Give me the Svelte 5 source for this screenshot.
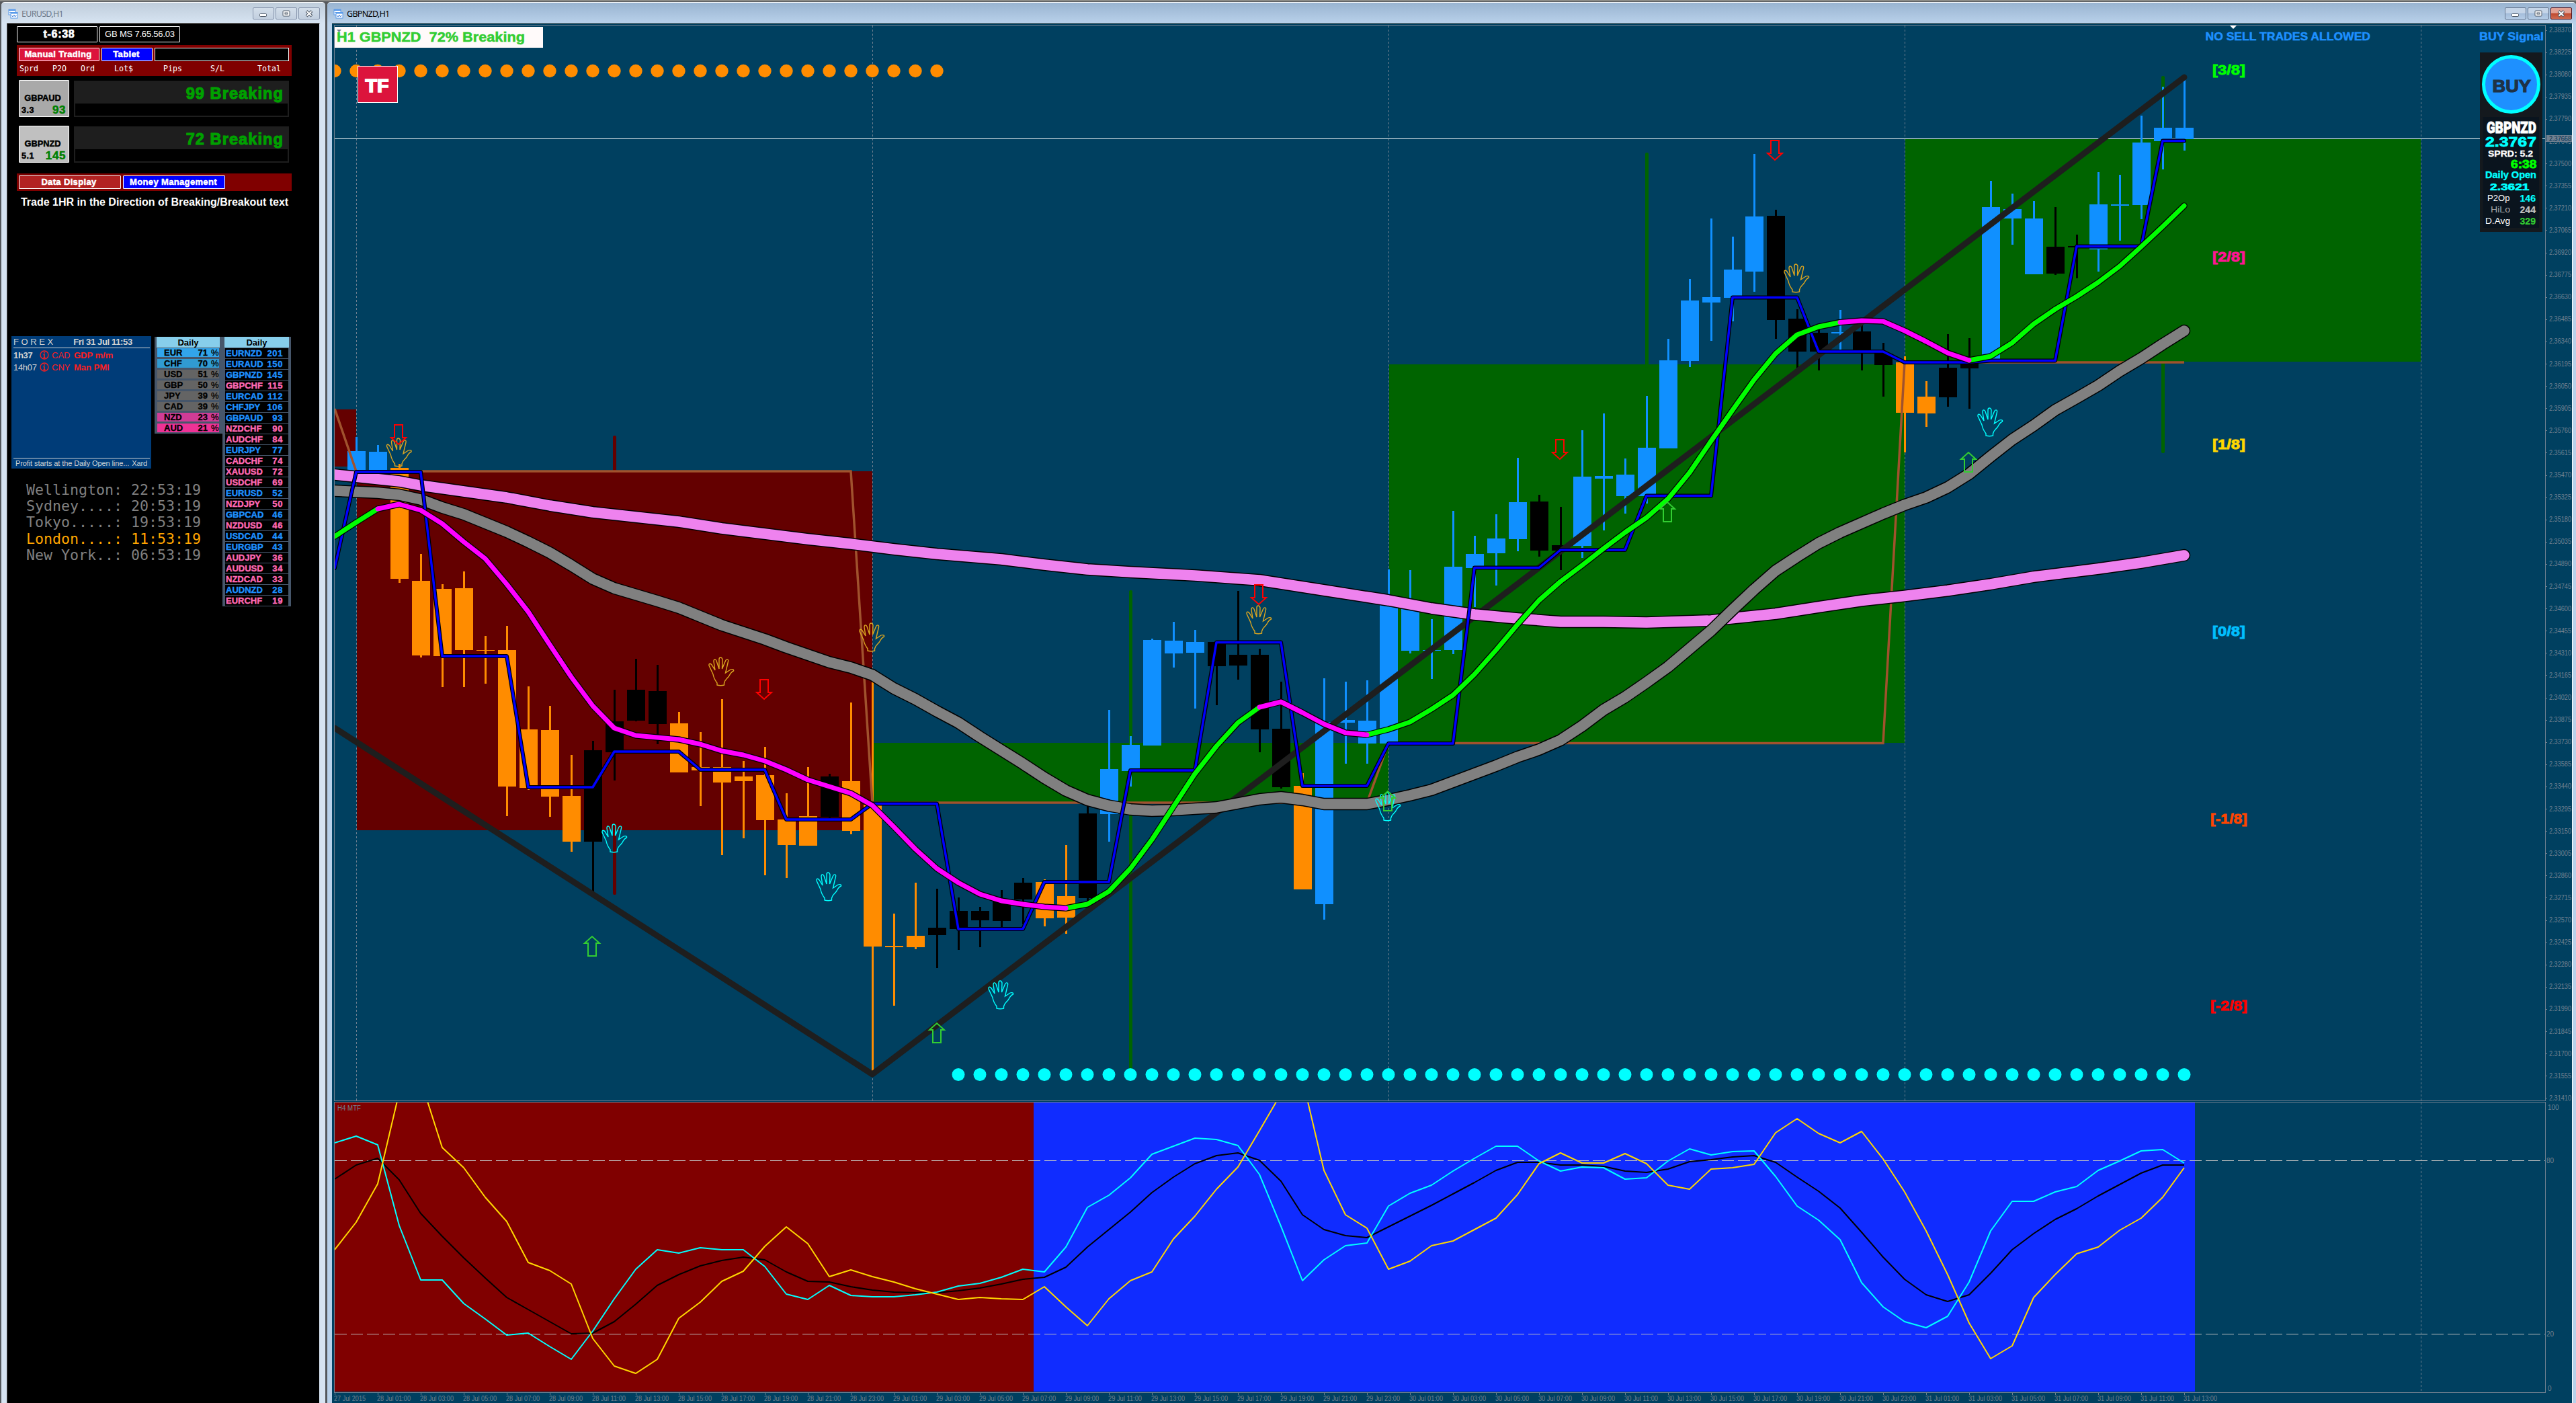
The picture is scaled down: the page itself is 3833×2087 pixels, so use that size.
<script>
  const STEP = 32;
  const X0 = 498;
  const bx = (i) => X0 + STEP * i;

  const colors = { B: '#1090ff', O: '#ff8c00', K: '#000000' };

  // [bar, high, top, bottom, low, colour]
  const candles = [
    [1, 650, 671, 700, 700, 'B'], [2, 662, 672, 700, 700, 'B'], [3, 690, 696, 861, 867, 'O'],
    [4, 824, 864, 975, 978, 'O'], [5, 869, 876, 976, 1022, 'O'], [6, 850, 875, 967, 1022, 'O'],
    [7, 946, 967, 968, 1017, 'O'], [8, 931, 967, 1170, 1214, 'O'], [9, 1021, 1085, 1172, 1175, 'O'],
    [10, 1050, 1086, 1185, 1215, 'O'], [11, 1123, 1184, 1252, 1267, 'O'], [12, 1102, 1116, 1252, 1327, 'K'],
    [13, 1026, 1073, 1119, 1161, 'K'], [14, 980, 1026, 1072, 1073, 'K'], [15, 989, 1028, 1077, 1107, 'K'],
    [16, 1059, 1076, 1149, 1149, 'O'], [17, 1089, 1141, 1146, 1199, 'O'], [18, 1040, 1141, 1164, 1272, 'O'],
    [19, 1132, 1155, 1162, 1247, 'O'], [20, 1111, 1153, 1220, 1302, 'O'], [21, 1180, 1219, 1257, 1306, 'O'],
    [22, 1141, 1214, 1258, 1258, 'O'], [23, 1151, 1155, 1215, 1217, 'K'], [24, 1045, 1162, 1236, 1241, 'O'],
    [25, 1004, 1197, 1408, 1598, 'O'], [26, 1359, 1407, 1409, 1496, 'O'], [27, 1313, 1392, 1409, 1412, 'O'],
    [28, 1322, 1380, 1391, 1440, 'K'], [29, 1335, 1355, 1382, 1413, 'K'], [30, 1349, 1355, 1369, 1409, 'K'],
    [31, 1324, 1338, 1370, 1379, 'K'], [32, 1306, 1313, 1338, 1375, 'K'], [33, 1308, 1312, 1366, 1378, 'O'],
    [34, 1257, 1333, 1365, 1389, 'O'], [35, 1198, 1210, 1336, 1340, 'K'], [36, 1056, 1144, 1211, 1252, 'B'],
    [37, 1095, 1108, 1147, 1170, 'B'], [38, 950, 952, 1109, 1109, 'B'], [39, 925, 953, 972, 993, 'B'],
    [40, 937, 955, 971, 1054, 'B'], [41, 955, 955, 991, 1049, 'K'], [42, 879, 974, 990, 1011, 'K'],
    [43, 965, 974, 1085, 1119, 'K'], [44, 1014, 1084, 1171, 1173, 'K'], [45, 1150, 1169, 1323, 1323, 'O'],
    [46, 1009, 1074, 1345, 1368, 'B'], [47, 1014, 1071, 1075, 1136, 'B'], [48, 1012, 1072, 1106, 1136, 'B'],
    [49, 847, 892, 1106, 1106, 'B'], [50, 848, 904, 968, 972, 'B'], [51, 921, 967, 968, 1010, 'B'],
    [52, 760, 843, 967, 973, 'B'], [53, 797, 824, 845, 903, 'B'], [54, 765, 801, 823, 871, 'B'],
    [55, 681, 747, 802, 820, 'B'], [56, 736, 746, 819, 828, 'K'], [57, 754, 811, 819, 848, 'K'],
    [58, 640, 709, 812, 830, 'B'], [59, 615, 708, 712, 789, 'B'], [60, 682, 706, 738, 764, 'B'],
    [61, 589, 666, 738, 749, 'B'], [62, 504, 536, 667, 667, 'B'], [63, 415, 447, 537, 546, 'B'],
    [64, 325, 442, 450, 507, 'B'], [65, 352, 401, 443, 478, 'B'], [66, 229, 322, 404, 434, 'B'],
    [67, 312, 321, 476, 504, 'K'], [68, 460, 474, 523, 550, 'K'], [69, 490, 495, 523, 551, 'K'],
    [70, 461, 494, 496, 520, 'B'], [71, 484, 493, 526, 551, 'K'], [72, 510, 526, 543, 590, 'K'],
    [73, 530, 539, 614, 673, 'O'], [74, 567, 590, 615, 635, 'O'], [75, 497, 547, 591, 605, 'K'],
    [76, 503, 537, 548, 608, 'K'], [77, 269, 308, 537, 537, 'B'], [78, 288, 311, 325, 364, 'B'],
    [79, 299, 325, 408, 408, 'B'], [80, 308, 367, 407, 409, 'K'], [81, 349, 366, 368, 414, 'K'],
    [82, 256, 304, 371, 404, 'B'], [83, 260, 304, 306, 358, 'B'], [84, 172, 212, 305, 326, 'B'],
    [85, 129, 190, 210, 252, 'B'], [86, 115, 190, 207, 224, 'B']
  ];

  // moving averages as [bar, y]
  const slowMa = [
    [0, 706], [3, 716], [4, 722], [6, 731], [8, 740], [10, 752], [12, 762], [14, 769], [16, 776], [18, 786],
    [20, 794], [22, 802], [24, 809], [26, 817], [28, 824], [31, 832], [33, 840], [35, 847], [37, 851], [40, 856],
    [43, 863], [46, 878], [49, 893], [51, 905], [53, 914], [55, 920], [57, 925], [59, 925], [61, 926], [64, 923],
    [67, 913], [69, 903], [71, 893.5], [73, 886.5], [75, 878.5], [77, 869], [79, 858], [82, 846], [84, 837], [86, 826]
  ];

  const midMa = [
    [0, 730], [2, 733], [3, 736], [4, 743], [5, 755], [6, 765], [7, 778], [8, 791], [9, 806], [10, 822], [11, 841],
    [12, 861], [13, 875], [15, 894], [16, 904], [17, 917], [18, 930], [20, 951], [21, 963], [23, 985], [24, 993],
    [25, 1004], [26, 1024], [27, 1040], [28, 1058], [29, 1075], [30, 1096], [31, 1116], [32, 1136], [33, 1157],
    [34, 1176], [35, 1190], [36, 1198.5], [37, 1204], [38, 1206], [39, 1205], [40, 1203], [41, 1201], [42, 1195],
    [43, 1189], [44, 1186], [45, 1190], [46, 1196], [47, 1196], [48, 1196], [49, 1190], [50, 1183], [51, 1175],
    [52, 1163], [53, 1151], [54, 1139], [55, 1126], [56, 1115], [57, 1101], [58, 1080], [59, 1056], [60, 1037],
    [61, 1015], [62, 992], [63, 965], [64, 938], [65, 907], [66, 877], [67, 849], [68, 828], [69, 808], [70, 792],
    [71, 778], [72, 764], [73, 751], [74, 740], [75, 725], [76, 705], [77, 679], [78, 654], [79, 633], [80, 610],
    [81, 592], [82, 573.5], [83, 552], [84, 533], [85, 512], [86, 492]
  ];

  const fastMa = [
    798, 777, 757, 750, 759, 779, 806, 831, 869, 910, 959, 1007, 1050, 1083, 1094, 1097, 1100, 1107, 1117, 1123,
    1132, 1145, 1160, 1170, 1180, 1198, 1230, 1263, 1292, 1313, 1330, 1340, 1345, 1349, 1351, 1345, 1326, 1292,
    1249, 1200, 1151, 1110, 1075, 1052, 1044, 1060, 1077, 1090, 1093, 1085, 1074, 1055, 1034, 1003, 967, 929,
    893, 865, 841, 816, 792, 770, 742, 703, 656, 610, 565, 526, 498, 486, 479.5, 477, 478, 492, 508, 525, 536,
    530, 510, 482, 460, 441, 420, 396, 367, 337, 306
  ];

  // stretches of the fast average, coloured by slope
  const fastRuns = [
    [0, 2, '#00ff00'], [34, 43, '#00ff00'], [48, 70, '#00ff00'], [76, 86, '#00ff00'],
    [2, 34, '#ff00ff'], [43, 48, '#ff00ff'], [70, 76, '#ff00ff']
  ];

  const h4Open = [
    [0, 845], [1, 702], [4, 702], [5, 976], [8, 976], [9, 1171], [12, 1171], [13, 1118], [16, 1118], [17, 1145],
    [20, 1145], [21, 1219], [24, 1219], [25, 1195.5], [28, 1195.5], [29, 1382], [32, 1382], [33, 1312], [36, 1312],
    [37, 1146], [40, 1146], [41, 955.5], [44, 955.5], [45, 1169], [48, 1169], [49, 1106], [52, 1106], [53, 844.5],
    [56, 844.5], [57, 818], [60, 818], [61, 737.5], [64, 737.5], [65, 442.5], [68, 442.5], [69, 523], [72, 523],
    [73, 539], [76, 539], [77, 536.5], [80, 536.5], [81, 366.5], [84, 366.5], [85, 209.5], [86, 209.5]
  ];

  const dailyOpen = [
    [0, 608], [1, 701], [24, 701], [25, 1194], [48, 1194], [49, 1105.5], [72, 1105.5], [73, 539], [86, 539]
  ];

  const signal = [
    60, 50, 63, 183, 264, 264, 299, 322, 346, 343, 363, 382, 340, 292, 248, 219, 224, 216, 219, 219, 244, 285, 293,
    272, 287, 289, 289, 286, 282, 273, 269, 260, 248, 252, 215, 156, 138, 112, 77, 65, 53, 55, 64, 107, 184, 265,
    234, 213, 209, 154, 135, 123, 102, 83, 65, 65, 87, 102, 96, 97, 114, 112, 87, 69, 78, 73, 72, 110, 154, 175,
    204, 268, 304, 326, 335, 318, 267, 191, 147, 147, 133, 125, 101, 87, 72, 70, 90
  ];
  const smooth = [
    114, 93, 83, 115, 165, 199, 231, 261, 290, 308, 326, 344, 343, 326, 300, 272, 256, 243, 235, 230, 234, 252, 266,
    267, 274, 279, 282, 283, 283, 280, 276, 270, 263, 260, 245, 215, 189, 163, 134, 111, 91, 79, 75, 86, 117, 167,
    189, 198, 201, 185, 169, 153, 136, 119, 101, 89, 89, 93, 93, 95, 102, 104, 99, 88, 85, 81, 79, 89, 111, 132,
    157, 193, 230, 263, 286, 296, 286, 254, 219, 195, 174, 158, 139, 122, 105, 93, 93
  ];
  const momentum = [
    219, 178, 121, -15, -33, 67, 97, 141, 177, 238, 250, 270, 351, 392, 403, 382, 321, 297, 266, 251, 214, 185, 210,
    259, 249, 259, 267, 277, 285, 293, 290, 292, 293, 274, 304, 332, 292, 265, 252, 203, 169, 129, 96, 42, -13, -35,
    101, 167, 187, 248, 236, 213, 206, 189, 172, 137, 91, 75, 90, 90, 76, 91, 123, 129, 99, 97, 92, 45, 24, 46, 60,
    43, 84, 133, 191, 256, 328, 381, 362, 290, 256, 225, 215, 190, 172, 141, 97
  ];

  const line = (pts) => pts.map(([i, y]) => `${bx(i)},${y}`).join(' ');
  const series = (ys, top = 0, from = 0) => ys.map((y, i) => `${bx(i + from)},${y + top}`).join(' ');

  const HAND =
    'M12 41v-3C9 34 7 31 6 25L0 12c-.5-3 2-4 4-1l5 8L7 6c0-4 3-4 4-1l4 12V3c0-4 4-4 5 0l-.5 14L24.5 5c1-3 5-3 4 1L24.5 23l6-4c2-2 7-2 6 1-3 1-5 4-7 8-3 4-6 5-7 10v3q-5 1.5-10.5 0z';
  const hands = [
    [593.5, 673, '#daa520'], [1073, 999, '#daa520'], [1297, 948, '#daa520'], [1873, 922, '#daa520'],
    [2673, 414, '#daa520'], [914, 1247, '#00ffff'], [1233, 1319, '#00ffff'], [1489, 1480, '#00ffff'],
    [2065, 1200, '#00ffff'], [2961, 628, '#00ffff']
  ];
  const sells = [[593, 646], [1137, 1025], [1873, 884], [2321, 668], [2641, 223]];
  const buys = [[881, 1407], [1394, 1536], [2065, 1191], [2481, 761], [2929, 687]];

  const levels = [
    ['[3/8]', 103.5, '#00ff00'], ['[2/8]', 382, '#ff1493'], ['[1/8]', 660.5, '#ffd700'],
    ['[0/8]', 939, '#00bfff'], ['[-1/8]', 1217.5, '#ff4500'], ['[-2/8]', 1496, '#ff0000']
  ];

  const prices = Array.from({ length: 49 }, (_, i) => ({
    label: (2.3837 - i * 0.00145).toFixed(5),
    y: 44.5 + i * 33.1
  }));

  const dates = Array.from({ length: 44 }, (_, k) => {
    const i = k * 2;
    if (i === 0) return { x: bx(0), label: '27 Jul 2015' };
    const h = i - 1;
    const hh = String(h % 24).padStart(2, '0');
    return { x: bx(i), label: `${28 + Math.floor(h / 24)} Jul ${hh}:00` };
  });

  const orangeDots = Array.from({ length: 29 }, (_, i) => i);
  const aquaDots = Array.from({ length: 58 }, (_, i) => i + 29);

  // [text, x, baseline, width, size, colour, face, outline]
  const info = [
    ['GBPNZD', 3700, 198, 74, 24.5, '#ffffff', 'cond', 1], ['2.3767', 3698, 218, 76, 20, '#00ffff', 'bold', 0.8],
    ['SPRD: 5.2', 3702, 233, 67, 13.5, '#ffffff', 'bold', 0.3], ['6:38', 3736, 250, 38.5, 16, '#00ff00', 'bold', 0.8],
    ['Daily Open', 3698, 265, 76, 14, '#00ffff', 'bold', 0.4], ['2.3621', 3705, 283, 58.5, 15.5, '#00ffff', 'bold', 0.7],
    ['P2Op', 3701, 299, 33.5, 13.5, '#ffffff', '', 0], ['146', 3749.5, 300, 23.5, 14, '#00ffff', 'bold', 0.2],
    ['HiLo', 3706, 316, 29, 13.5, '#a9a9a9', '', 0], ['244', 3749.5, 317, 23.5, 14, '#c0c0c0', 'bold', 0.2],
    ['D.Avg', 3698, 333, 37, 13.5, '#ffffff', '', 0], ['329', 3749.5, 334, 23.5, 14, '#32cd32', 'bold', 0.2]
  ];

  const trades = [
    { pair: 'GBPAUD', spread: '3.3', pips: '93', status: '99 Breaking' },
    { pair: 'GBPNZD', spread: '5.1', pips: '145', status: '72 Breaking', light: true }
  ];

  const strength = [
    ['EUR', 71, '#32a5eb'], ['CHF', 70, '#309bd2'], ['USD', 51, '#646464'], ['GBP', 50, '#646464'],
    ['JPY', 39, '#646464'], ['CAD', 39, '#646464'], ['NZD', 23, '#d03c96'], ['AUD', 21, '#ee3296']
  ];

  const pairs = [
    ['EURNZD', 201, 1], ['EURAUD', 150, 1], ['GBPNZD', 145, 1], ['GBPCHF', 115, 0], ['EURCAD', 112, 1],
    ['CHFJPY', 106, 1], ['GBPAUD', 93, 1], ['NZDCHF', 90, 0], ['AUDCHF', 84, 0], ['EURJPY', 77, 1],
    ['CADCHF', 74, 0], ['XAUUSD', 72, 0], ['USDCHF', 69, 0], ['EURUSD', 52, 1], ['NZDJPY', 50, 0],
    ['GBPCAD', 46, 1], ['NZDUSD', 46, 0], ['USDCAD', 44, 1], ['EURGBP', 43, 1], ['AUDJPY', 36, 0],
    ['AUDUSD', 34, 0], ['NZDCAD', 33, 0], ['AUDNZD', 28, 1], ['EURCHF', 19, 0]
  ];

  const clocks = [
    'Wellington: 22:53:19', 'Sydney....: 20:53:19', 'Tokyo.....: 19:53:19',
    'London....: 11:53:19', 'New York..: 06:53:19'
  ];
</script>

{#snippet titlebar(title)}
  <header class="titlebar">
    <svg class="app-icon" width="15" height="15" viewBox="0 0 15 15">
      <rect x="1" y="1" width="10" height="8" fill="#fff" stroke="#5b9bea" />
      <path d="M1 2h10" stroke="#5b9bea" stroke-width="2" />
      <path d="M2 6l2-1 1 2 2-2" fill="none" stroke="#5b9bea" />
      <rect x="4" y="5.5" width="10" height="8.5" fill="#fff" stroke="#5b9bea" />
      <path d="M4 6.500h10" stroke="#5b9bea" stroke-width="2" />
      <path d="M5.500 10l1.500 2 2-3 1.500 3 2-2.500" fill="none" stroke="#3f7fd8" />
    </svg>
    <span class="title">{title}</span>
    <span class="win-btn">
      <svg width="30" height="16"><rect x="9.500" y="8.500" width="10" height="4" rx="1" fill="#fff" stroke="#4f5a68" /></svg>
    </span>
    <span class="win-btn">
      <svg width="30" height="16">
        <rect x="10" y="4" width="10" height="8" rx="1" fill="#fff" stroke="#4f5a68" />
        <rect x="13" y="7" width="4" height="2" fill="#fff" stroke="#4f5a68" />
      </svg>
    </span>
    <span class="win-btn close">
      <svg width="30" height="16">
        <path d="M11 4.500l8 7.500M19 4.500l-8 7.500" stroke="#4f5a68" stroke-width="4" />
        <path d="M11.500 5l7 6.500M18.500 5l-7 6.500" stroke="#fff" stroke-width="2" />
      </svg>
    </span>
  </header>
{/snippet}

{#snippet infoIcon()}
  <svg width="14" height="14" viewBox="0 0 14 14" stroke="#ff1e1e">
    <circle cx="7" cy="7" r="6" fill="none" stroke-width="1.3" />
    <path d="M7 3v1.700M7 6v5M5.500 11h3M5.500 6.500h1.500" stroke-width="1.5" />
  </svg>
{/snippet}

<div class="desktop">
  <section class="window left">
    {@render titlebar('EURUSD,H1')}
    <div class="panel">
      <div class="row">
        <div class="box timer">t-6:38</div>
        <div class="box version">GB MS 7.65.56.03</div>
      </div>

      <div class="band top">
        <div class="row">
          <button class="btn manual">Manual Trading</button>
          <button class="btn tablet">Tablet</button>
          <div class="slot"></div>
        </div>
        <div class="cols">
          <span>Sprd</span><span>P2O</span><span>Ord</span><span>Lot$</span><span>Pips</span><span>S/L</span><span>Total</span>
        </div>
      </div>

      {#each trades as t}
        <div class="trade">
          <div class="pair" class:light={t.light}>
            <b>{t.pair}</b>
            <div class="nums"><span>{t.spread}</span><em>{t.pips}</em></div>
          </div>
          <div class="status">
            <span>{t.status}</span>
            <div class="bar"></div>
          </div>
        </div>
      {/each}

      <div class="band bottom">
        <button class="btn data">Data Display</button>
        <button class="btn money">Money Management</button>
      </div>
      <div class="advice">Trade 1HR in the Direction of Breaking/Breakout text</div>

      <div class="tables">
        <div class="side">
          <div class="news">
            <div class="news-head"><span>F O R E X</span><b>Fri 31 Jul 11:53</b></div>
            <div class="news-row">
              <b class="when">1h37</b>
              {@render infoIcon()}
              <span class="cur">CAD</span><b>GDP m/m</b>
            </div>
            <div class="news-row">
              <span class="when">14h07</span>
              {@render infoIcon()}
              <span class="cur">CNY</span><b>Man PMI</b>
            </div>
            <div class="news-foot"><span>Profit starts at the Daily Open line...</span><span>Xard</span></div>
          </div>
        </div>

        <div class="strength">
          <div class="th">Daily</div>
          {#each strength as [cur, pct, bg]}
            <div class="srow" style="background: {bg}"><span>{cur}</span><span>{pct}</span><i>%</i></div>
          {/each}
        </div>

        <div class="pairs">
          <div class="th">Daily</div>
          {#each pairs as [name, value, up]}
            <div class="prow" class:up><span>{name}</span><span>{value}</span></div>
          {/each}
        </div>

        <div class="clocks">
          {#each clocks as c}
            <div class:now={c.startsWith('London')}>{c}</div>
          {/each}
        </div>
      </div>
    </div>
  </section>

  <section class="window right">
    {@render titlebar('GBPNZD,H1')}
    <svg class="chart" width="3333" height="2052" viewBox="494 35 3333 2052">
      <defs>
        <clipPath id="price"><rect x="498" y="38" width="3289" height="1599" /></clipPath>
        <clipPath id="osc"><rect x="498" y="1640" width="3289" height="430" /></clipPath>
      </defs>
      <rect x="494" y="35" width="3333" height="2052" fill="#004060" />

      <g clip-path="url(#price)">
        <!-- day separators -->
        {#each [1, 25, 49, 73, 97] as i}
          <line class="sep" x1={bx(i) + 0.5} x2={bx(i) + 0.5} y1="38" y2="1637" />
        {/each}

        <!-- daily ranges -->
        <g fill="#640000">
          <rect x="498" y="609" width="32" height="85" />
          <rect x="531" y="701" width="767" height="534" />
          <rect x="912" y="648" width="5" height="683" rx="2" />
        </g>
        <g fill="#006400">
          <rect x="1299" y="1105" width="767" height="89" />
          <rect x="2067" y="542" width="767" height="563" />
          <rect x="2835" y="206" width="767" height="332" />
          <rect x="1680" y="878" width="5" height="715" rx="2" />
          <rect x="2448" y="227" width="5" height="320" rx="2" />
          <rect x="3216" y="113" width="5" height="561" rx="2" />
        </g>

        <line x1="498" x2="3787" y1="206.5" y2="206.5" stroke="#fff" />

        {#each candles as [i, hi, top, bottom, lo, c]}
          <rect x={bx(i) - 1} y={hi} width="3" height={lo - hi} fill={colors[c]} />
          <rect x={bx(i) - 13} y={top} width="27" height={Math.max(bottom - top, 1)} fill={colors[c]} />
        {/each}

        <polyline points={line(dailyOpen)} fill="none" stroke="#a0522d" stroke-width="3.5" />
        <polyline points={line([[0, 1083], [25, 1598], [86, 115]])} fill="none" stroke="#1e1e1e" stroke-width="9" stroke-linecap="round" stroke-linejoin="round" />

        {#each orangeDots as i}
          <circle cx={bx(i)} cy="105.5" r="9.7" fill="#ff8c00" />
        {/each}
        {#each aquaDots as i}
          <circle cx={bx(i)} cy="1598.5" r="9.5" fill="#00ffff" />
        {/each}

        <g class="ma">
          <polyline points={line(slowMa)} stroke="#000" stroke-width="18.5" />
          <polyline points={line(slowMa)} stroke="#ee82ee" stroke-width="15.5" />
          <polyline points={line(midMa)} stroke="#000" stroke-width="18.5" />
          <polyline points={line(midMa)} stroke="#808080" stroke-width="15.5" />
          <polyline points={line(h4Open)} stroke="#000" stroke-width="6" />
          <polyline points={line(h4Open)} stroke="#0000ff" stroke-width="3.5" />
          <polyline points={series(fastMa)} stroke="#000" stroke-width="9.5" />
          {#each fastRuns as [from, to, color]}
            <polyline points={series(fastMa.slice(from, to + 1), 0, from)} stroke={color} stroke-width="7" />
          {/each}
        </g>

        {#each hands as [x, y, color]}
          <path d={HAND} transform="translate({x - 18} {y - 21})" fill="none" stroke={color} stroke-width="1.4" />
        {/each}
        {#each sells as [x, y]}
          <path d="M-6 -14H6V5H11L0 15L-11 5H-6Z" transform="translate({x} {y})" fill="none" stroke="#ff0000" stroke-width="2" />
        {/each}
        {#each buys as [x, y]}
          <path d="M-6 15H6V-4H11L0 -14L-11 -4H-6Z" transform="translate({x} {y})" fill="none" stroke="#32cd32" stroke-width="2" />
        {/each}
      </g>

      <!-- oscillator -->
      <g clip-path="url(#osc)">
        <rect x="498" y="1640" width="1040" height="430" fill="#800000" />
        <rect x="1538" y="1640" width="1728" height="430" fill="#102cff" />
        <line class="sep" x1="3602.5" x2="3602.5" y1="1640" y2="2070" />
        <line class="mark" x1="498" x2="3787" y1="1726.5" y2="1726.5" />
        <line class="mark" x1="498" x2="3787" y1="1984.5" y2="1984.5" />
        <g class="osc">
          <polyline points={series(smooth, 1640)} stroke="#000" />
          <polyline points={series(signal, 1640)} stroke="#00ffff" />
          <polyline points={series(momentum, 1640)} stroke="#ffd700" />
        </g>
      </g>

      <g stroke="#708090" fill="none">
        <rect x="497.5" y="37.5" width="3290" height="1600" />
        <rect x="497.5" y="1639.5" width="3290" height="432" />
      </g>

      <!-- scales -->
      <g class="scale">
        {#each prices as p}
          <path d="M3788 {Math.round(p.y) + 0.5}h2" stroke="#708090" />
          <text x="3793" y={p.y + 3.5} textLength="33" lengthAdjust="spacingAndGlyphs">{p.label}</text>
        {/each}
        <rect x="3789" y="201" width="38" height="10" fill="#708090" />
        <text x="3793" y="209.5" textLength="33" lengthAdjust="spacingAndGlyphs" class="cur-price">2.37668</text>
        <text x="3791" y="1650.5">100</text>
        <text x="3789" y="1729.5">80</text>
        <text x="3789" y="1987.5">20</text>
        <text x="3791" y="2068.5">0</text>
        <text x="502" y="1652" textLength="35" lengthAdjust="spacingAndGlyphs">H4 MTF</text>
        {#each dates as d}
          <path d="M{d.x + 0.5} 2072v3" stroke="#708090" />
          <text x={d.x - 1} y="2083.5" textLength={d.x === X0 ? 47 : 50} lengthAdjust="spacingAndGlyphs">{d.label}</text>
        {/each}
      </g>

      {#each levels as [label, y, color]}
        <text class="bold" x="3316.5" y={y + 7} text-anchor="middle" font-size="20.5" fill={color} stroke={color} stroke-width="0.8"
          textLength={label.length > 5 ? 55 : 49} lengthAdjust="spacingAndGlyphs">{label}</text>
      {/each}

      <rect x="498" y="40" width="310" height="31" fill="#fffafa" />
      <text class="bold" x="501" y="62" font-size="20" fill="#32cd32" stroke="#32cd32" stroke-width="0.5" textLength="280" lengthAdjust="spacingAndGlyphs" xml:space="preserve">H1 GBPNZD  72% Breaking</text>
      <path d="M501 44h7l-3.500 4z" fill="#708090" />

      <rect x="532.5" y="98.5" width="59" height="54" fill="#dc143c" stroke="#fff" />
      <text class="bold" x="543.5" y="137" font-size="27" fill="#fff" stroke="#fff" stroke-width="1.6" textLength="35" lengthAdjust="spacingAndGlyphs">TF</text>

      <path d="M3318 38h10l-5 5z" fill="#fff" />
      <text class="bold" x="3281.5" y="60" font-size="16.5" fill="#1e90ff" stroke="#1e90ff" stroke-width="0.5" textLength="245.5" lengthAdjust="spacingAndGlyphs">NO SELL TRADES ALLOWED</text>
      <text class="bold" x="3689" y="60" font-size="16.5" fill="#1e90ff" stroke="#1e90ff" stroke-width="0.5" textLength="96" lengthAdjust="spacingAndGlyphs">BUY Signal</text>

      <rect x="3690" y="78" width="93" height="267" fill="#14191e" />
      <rect x="3694.5" y="174" width="83.5" height="165" fill="#0a141e" />
      <circle cx="3736.5" cy="125.4" r="41" fill="#1e90ff" stroke="#00ffff" stroke-width="5" />
      <text class="bold" x="3708.5" y="136.5" font-size="25" fill="#1e3246" stroke="#1e3246" stroke-width="1.2" textLength="57.5" lengthAdjust="spacingAndGlyphs">BUY</text>
      {#each info as [label, x, y, w, size, color, face, outline]}
        <text class={face} {x} {y} font-size={size} fill={color} stroke={color} stroke-width={outline} textLength={w} lengthAdjust="spacingAndGlyphs">{label}</text>
      {/each}
    </svg>
  </section>
</div>

<style>
  :global(body) {
    background: #55585c;
  }

  .desktop {
    box-sizing: border-box;
    display: flex;
    gap: 3px;
    width: 3833px;
    height: 2087px;
    padding: 1px 0 0 2px;
    border-top: 2px solid #8c8c88;
    overflow: hidden;
    font-family: 'Liberation Sans', Arial, sans-serif;
  }

  .window {
    box-sizing: border-box;
    height: 2084px;
    border-top: 1px solid #fff;
    border-radius: 5px 5px 0 0;
    overflow: hidden;
  }

  .left {
    width: 482px;
    padding: 0 8px;
    background: linear-gradient(#bfcddb, #d7e4f2 31px);
  }

  .right {
    width: 3346px;
    padding: 0 6px 0 7px;
    background: linear-gradient(#99b4d1, #b9d1ea 31px);
  }

  .titlebar {
    box-sizing: border-box;
    display: flex;
    align-items: center;
    gap: 2px;
    height: 31px;
    padding: 2px 0 0 2px;
    border-bottom: 1px solid #808080;
  }

  .title {
    flex: 1;
    margin-left: 3px;
    font: 12.5px 'Noto Sans', sans-serif;
    letter-spacing: -0.7px;
    color: #6d7a8a;
  }

  .right .title {
    color: #000;
  }

  .win-btn {
    box-sizing: border-box;
    width: 32px;
    height: 18px;
    border: 1px solid #8593ab;
    border-radius: 2px;
    background: linear-gradient(#d3deea, #c2cfdf);
  }

  .right .win-btn {
    background: linear-gradient(#c5d5e8 45%, #a3bcda 50%, #b4cce6);
    border-color: #65758e;
  }

  .right .win-btn.close {
    background: linear-gradient(#e2a194 45%, #c0492e 50%, #cd6a50);
    border-color: #4f1420;
  }

  .win-btn svg {
    display: block;
  }

  .chart {
    display: block;
    border-right: 1px solid #fff;
  }

  .panel {
    box-sizing: border-box;
    width: 465px;
    height: 2053px;
    padding: 4px 0 0 14px;
    background: #000;
    border-left: 1px solid #555;
    color: #fff;
  }

  .row {
    display: flex;
    gap: 3px;
  }

  .box {
    box-sizing: border-box;
    width: 120px;
    height: 24px;
    border: 1px solid #fff;
    border-radius: 1px;
    text-align: center;
    line-height: 22px;
  }

  .timer {
    padding-left: 6px;
    font-weight: bold;
    font-size: 16px;
    letter-spacing: 0.7px;
    -webkit-text-stroke: 0.7px;
  }

  .version {
    font-size: 13px;
    letter-spacing: -0.2px;
  }

  .band {
    box-sizing: border-box;
    width: 409px;
    background: #800000;
  }

  .band.top {
    height: 46px;
    margin-top: 4px;
    padding: 4px 3px 0;
  }

  .btn {
    box-sizing: border-box;
    height: 20px;
    padding: 0;
    border: 1px solid #fff;
    border-radius: 1px;
    color: #fff;
    font: bold 13px/18px 'Liberation Sans', Arial, sans-serif;
    letter-spacing: 0.35px;
    -webkit-text-stroke: 0.5px;
    white-space: nowrap;
  }

  .manual {
    width: 120px;
    padding-right: 3px;
    background: #dc143c;
  }

  .tablet {
    width: 76px;
    padding-right: 2px;
    background: #0000ff;
  }

  .slot {
    box-sizing: border-box;
    width: 200px;
    height: 20px;
    border: 1px solid #fff;
    background: #000;
  }

  .cols {
    display: grid;
    grid-template-columns: 49px 42px 50px 73px 70px 70px 40px;
    padding-left: 1px;
    font: 11.6px/22px 'DejaVu Sans Mono', monospace;
  }

  .trade {
    display: flex;
    gap: 7px;
    height: 55px;
    margin: 6px 0 13px 3px;
  }

  .pair {
    box-sizing: border-box;
    width: 75px;
    padding: 17px 4px 0 3px;
    border: 1px solid #fff;
    border-radius: 1px;
    background: #a9a9a9;
    color: #000;
    font-weight: bold;
    text-align: center;
    -webkit-text-stroke: 0.5px;
  }

  .pair.light {
    background: #c0c0c0;
  }

  .pair b {
    display: block;
    padding-right: 3px;
    font-size: 12.8px;
    line-height: 18px;
  }

  .nums {
    display: flex;
    justify-content: space-between;
    align-items: center;
    font-size: 12.5px;
    line-height: 18px;
    letter-spacing: 0.6px;
  }

  .nums em {
    font-size: 17px;
    font-style: normal;
    color: #008000;
  }

  .status {
    box-sizing: border-box;
    width: 320px;
    height: 54px;
    margin-top: 1px;
    padding: 0 2px;
    background: #1e1e1e;
    color: #00a000;
    font-weight: bold;
    font-size: 23.5px;
    line-height: 38px;
    letter-spacing: 1.1px;
    text-align: right;
    -webkit-text-stroke: 1.1px;
  }

  .status span {
    display: block;
    height: 34px;
    padding-right: 6px;
  }

  .status .bar {
    height: 18px;
    background: #000;
  }

  .band.bottom {
    display: flex;
    gap: 3px;
    height: 26px;
    margin-top: 16px;
    padding: 3px;
  }

  .data {
    width: 152px;
    padding-right: 3px;
    background: #b22222;
  }

  .money {
    width: 152px;
    padding-right: 2px;
    background: #0000ff;
  }

  .advice {
    margin: 7px 0 0 6px;
    font-weight: bold;
    font-size: 16px;
    line-height: 20px;
    letter-spacing: -0.02px;
    white-space: nowrap;
  }

  .tables {
    display: grid;
    grid-template-columns: 213px 101px 102px;
    grid-template-rows: 225px auto;
    margin: 190px 0 0 -8px;
    font-weight: bold;
  }

  .news {
    box-sizing: border-box;
    display: flex;
    flex-direction: column;
    width: 208px;
    height: 197px;
    margin-top: -1px;
    padding: 0 2px 0 3px;
    background: #003c78;
    color: #d3d3d3;
    font-size: 13px;
    font-weight: normal;
  }

  .news-head {
    display: flex;
    gap: 30px;
    height: 17px;
    line-height: 18px;
    margin-bottom: 1px;
    border-bottom: 1px solid #d3d3d3;
    white-space: nowrap;
  }

  .news-head b {
    letter-spacing: -0.35px;
  }

  .news-row {
    display: flex;
    align-items: center;
    height: 18px;
    color: #ff1e1e;
    white-space: nowrap;
  }

  .news-row .when {
    width: 39px;
    color: #d3d3d3;
    letter-spacing: -0.3px;
  }

  .news-row .cur {
    width: 33px;
    margin-left: 4px;
  }

  .news-foot {
    display: flex;
    justify-content: space-between;
    margin-top: auto;
    height: 15px;
    padding: 0 4px 0 3px;
    border-top: 1px solid #d3d3d3;
    font-size: 11px;
    line-height: 15px;
    letter-spacing: -0.1px;
  }

  .strength {
    height: 144px;
    padding: 0 5px 0 4px;
    background: #46566a;
    align-self: start;
  }

  .th {
    height: 16px;
    margin: 0 -1px 1px;
    background: #87ceeb;
    color: #000;
    font-size: 13px;
    line-height: 17px;
    text-align: center;
  }

  .srow {
    display: grid;
    grid-template-columns: 36px 29px 1fr;
    height: 13px;
    margin-bottom: 3px;
    padding-left: 10px;
    color: #000;
    font-size: 13px;
    line-height: 13px;
    -webkit-text-stroke: 0.3px;
  }

  .srow span:nth-child(2) {
    text-align: right;
  }

  .srow i {
    padding-left: 5px;
    font-style: normal;
    font-weight: normal;
  }

  .srow:last-child {
    margin-bottom: 0;
  }

  .pairs {
    grid-row: span 2;
    padding: 0 4px;
    background: #46566a;
    align-self: start;
  }

  .prow {
    display: flex;
    justify-content: space-between;
    height: 15px;
    margin-bottom: 1px;
    padding: 0 8px 0 1px;
    background: #000;
    color: #ff69b4;
    font-size: 13px;
    line-height: 15px;
    -webkit-text-stroke: 0.4px;
  }

  .prow span:last-child {
    letter-spacing: 0.6px;
  }

  .prow.up {
    color: #1e90ff;
  }

  .clocks {
    grid-column: 1 / 3;
    grid-row: 2;
    margin: -9px 0 0 22px;
    font: normal 21.6px/24.2px 'DejaVu Sans Mono', monospace;
    color: #808080;
    white-space: pre;
  }

  .clocks .now {
    color: #ffa500;
  }

  .sep {
    stroke: #708090;
    stroke-dasharray: 3 3;
  }

  .mark {
    stroke: #c0c0c0;
    stroke-dasharray: 18 6;
  }

  .ma polyline {
    fill: none;
    stroke-linecap: round;
    stroke-linejoin: round;
  }

  .osc polyline {
    fill: none;
    stroke-width: 2;
    stroke-linejoin: round;
  }

  .scale {
    fill: #708090;
    font-size: 10px;
  }

  .cur-price {
    fill: #003050;
  }

  .bold {
    font-weight: bold;
  }

  .cond {
    font-family: Roboto, sans-serif;
    font-weight: 900;
  }
</style>
